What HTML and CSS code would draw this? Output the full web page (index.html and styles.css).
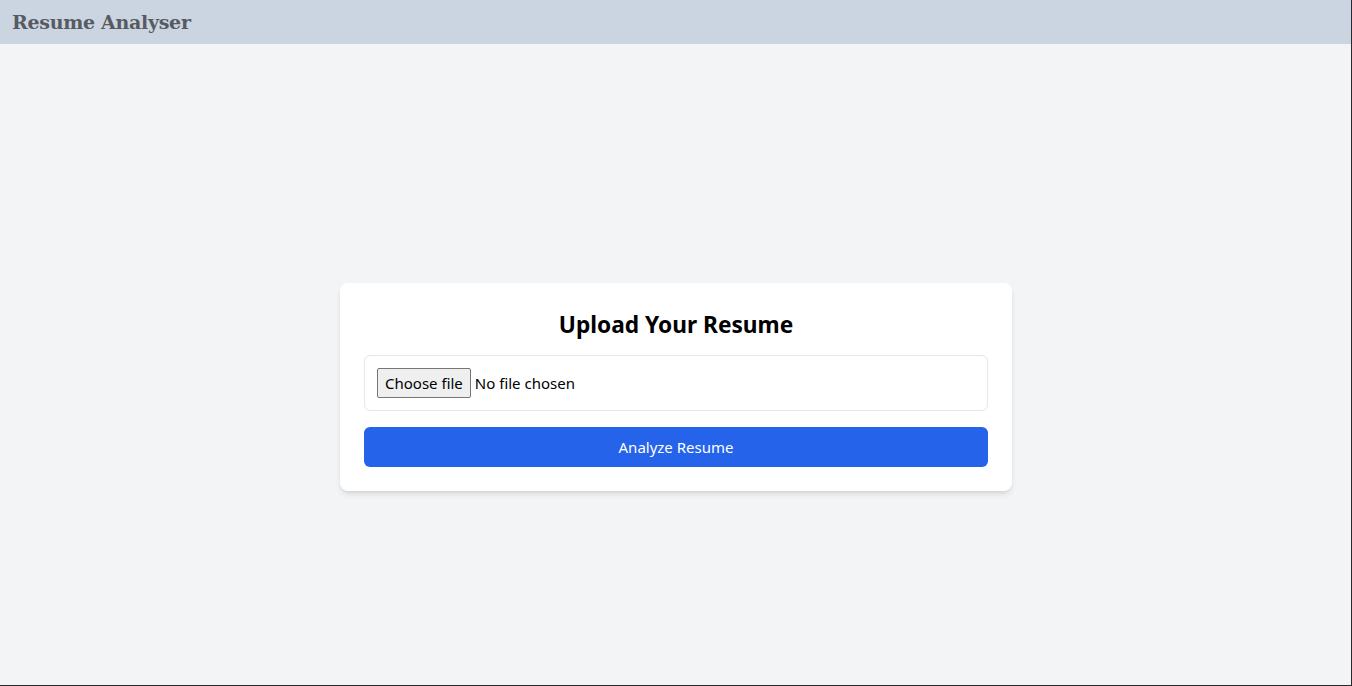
FILE: index.html
```html
<!DOCTYPE html>
<html lang="en">
<head>
<meta charset="utf-8">
<title>Resume Analyser</title>
<link rel="stylesheet" href="styles.css">
</head>
<body>
<header class="topbar">
  <h1 class="brand">Resume Analyser</h1>
</header>
<main class="main">
  <form class="card">
    <h2 class="card-title">Upload Your Resume</h2>
    <label class="file-box">
      <input class="file-input" type="file">
      <span class="file-btn">Choose file</span>
      <span class="file-name">No file chosen</span>
    </label>
    <button class="submit" type="button">Analyze Resume</button>
  </form>
</main>
<div class="frame"></div>
</body>
</html>
```

FILE: styles.css
```css
* { box-sizing: border-box; }
html, body { margin: 0; padding: 0; }
body {
  background: #f3f4f6;
  font-family: "Noto Sans", "Open Sans", sans-serif;
  color: #000;
}
.topbar {
  background: #cbd5e1;
  height: 44px;
  display: flex;
  align-items: center;
  padding: 0 12px;
}
.brand {
  margin: 0;
  font-family: "DejaVu Serif", "Liberation Serif", serif;
  font-size: 19px;
  font-weight: bold;
  color: #575b61;
  letter-spacing: -0.3px;
}
.main {
  min-height: 100vh;
  display: flex;
  align-items: center;
  justify-content: center;
}
.card {
  width: 672px;
  background: #fff;
  border-radius: 8px;
  padding: 24px;
  box-shadow: 0 4px 6px -1px rgba(0,0,0,0.1), 0 2px 4px -2px rgba(0,0,0,0.1);
  display: flex;
  flex-direction: column;
  gap: 16px;
}
.card-title {
  margin: 0;
  text-align: center;
  font-size: 22.7px;
  line-height: 28px;
  padding-top: 4px;
  font-weight: 700;
}
.file-box {
  border: 1px solid #e5e7eb;
  border-radius: 6px;
  height: 56px;
  padding: 0 12px;
  display: flex;
  align-items: center;
  gap: 4px;
  font-size: 15px;
}
.file-input { display: none; }
.file-btn {
  height: 30px;
  padding: 0 7px;
  display: flex;
  align-items: center;
  background: #efefef;
  border: 1px solid #767676;
  border-radius: 2px;
  color: #000;
}
.file-name { color: #000; }
.submit {
  height: 40px;
  border: 0;
  border-radius: 6px;
  background: #2563eb;
  color: #fff;
  font-family: "Noto Sans", "Open Sans", sans-serif;
  font-size: 15px;
}
.frame {
  position: fixed;
  inset: 0;
  border-right: 1px solid #2a2a2a;
  border-bottom: 1px solid #2a2a2a;
  pointer-events: none;
}
```
